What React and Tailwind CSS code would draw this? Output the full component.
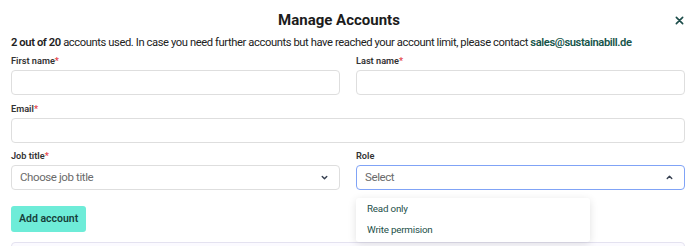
import React from 'react';

const ChevronDown = () => (
  <svg width="9" height="9" viewBox="0 0 10 10" fill="none" stroke="#374151" strokeWidth="1.6" strokeLinecap="round" strokeLinejoin="round">
    <path d="M2.5 4l2.5 2.5L7.5 4" />
  </svg>
);

const ChevronUp = () => (
  <svg width="9" height="9" viewBox="0 0 10 10" fill="none" stroke="#374151" strokeWidth="1.6" strokeLinecap="round" strokeLinejoin="round">
    <path d="M2.5 6l2.5-2.5L7.5 6" />
  </svg>
);

const Label = ({ children, required }) => (
  <label className="block text-[9.2px] font-semibold text-[#333] mb-[2px] leading-[14px]">
    {children}
    {required && <span className="text-[#e5484d]">*</span>}
  </label>
);

const Input = () => (
  <div className="h-[25px] rounded-[4px] border border-[#dedede] bg-white" />
);

export default function App() {
  return (
    <div className="w-[688px] h-[246px] overflow-hidden bg-white pl-[11px] pr-[3px] pt-[10px] text-[#1f1f1f]" style={{ fontFamily: 'Roboto, "Noto Sans", sans-serif' }}>
      <div className="flex items-center h-[20px]">
        <h2 className="flex-1 text-center text-[15px] font-bold leading-[20px] text-[#1c1c1c]">Manage Accounts</h2>
        <button className="w-[18px] h-[20px] flex items-center justify-end pr-[1px] text-[#1d4d4a]">
          <svg width="9" height="9" viewBox="0 0 10 10" stroke="currentColor" strokeWidth="1.8" strokeLinecap="round">
            <path d="M1.5 1.5l7 7M8.5 1.5l-7 7" />
          </svg>
        </button>
      </div>

      <p className="mt-[5px] text-[11.2px] tracking-[-0.4px] leading-[16px] text-[#222] whitespace-nowrap">
        <span className="font-semibold">2 out of 20</span> accounts used. In case you need further accounts but have reached your account limit, please contact{' '}
        <span className="font-semibold text-[#16544a]">sales@sustainabill.de</span>
      </p>

      <div className="grid grid-cols-2 gap-x-[16px] mt-[3px]">
        <div>
          <Label required>First name</Label>
          <Input />
        </div>
        <div>
          <Label required>Last name</Label>
          <Input />
        </div>
      </div>

      <div className="mt-[7px]">
        <Label required>Email</Label>
        <Input />
      </div>

      <div className="grid grid-cols-2 gap-x-[16px] mt-[6px]">
        <div>
          <Label required>Job title</Label>
          <div className="h-[25px] rounded-[4px] border border-[#dedede] bg-white flex items-center justify-between pl-[8px] pr-[10px]">
            <span className="text-[11.5px] tracking-[-0.4px] text-[#6b6b6b]">Choose job title</span>
            <ChevronDown />
          </div>
        </div>
        <div className="relative">
          <Label>Role</Label>
          <div className="h-[25px] rounded-[4px] border-[1.5px] border-[#80a3f6] bg-white flex items-center justify-between pl-[8px] pr-[10px]">
            <span className="text-[11.5px] tracking-[-0.4px] text-[#6b6b6b]">Select</span>
            <ChevronUp />
          </div>
          <ul className="absolute left-0 top-[49px] w-[234px] bg-white rounded-[3px] shadow-[0_2px_8px_rgba(0,0,0,0.12)] py-[1px] z-10">
            <li className="px-[11px] h-[21px] flex items-center text-[9.8px] tracking-[-0.2px] text-[#24504a]">Read only</li>
            <li className="px-[11px] h-[21px] flex items-center text-[9.8px] tracking-[-0.2px] text-[#24504a]">Write permision</li>
          </ul>
        </div>
      </div>

      <button className="mt-[16px] h-[26px] px-[8px] rounded-[3px] bg-[#6eecd8] text-[10.5px] font-semibold text-[#163f3a]">
        Add account
      </button>

      <div className="mt-[10px] h-[20px] rounded-t-[4px] border border-[#e4e2f0] bg-[#fbfaff]" />
    </div>
  );
}
